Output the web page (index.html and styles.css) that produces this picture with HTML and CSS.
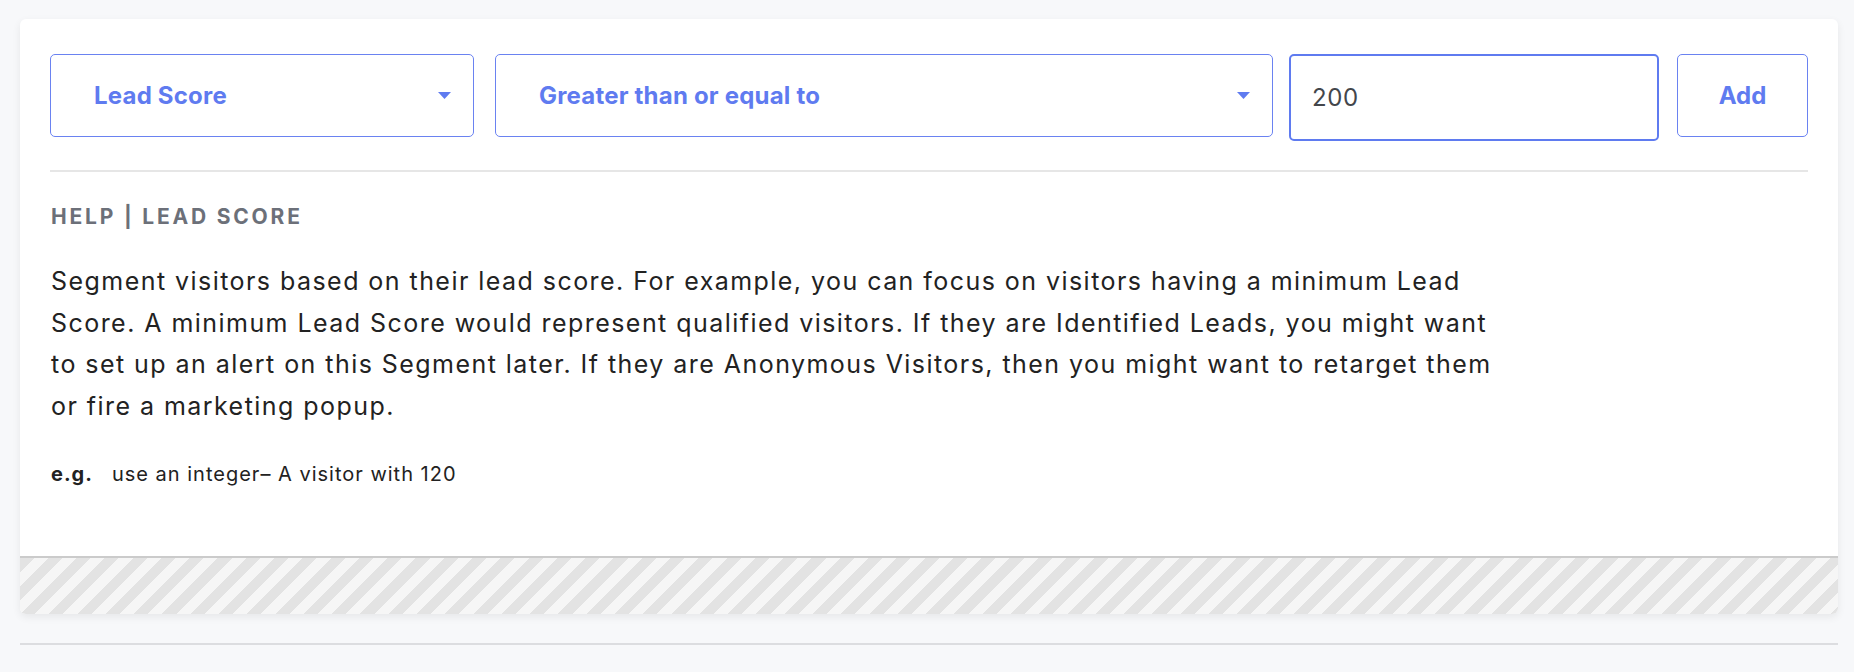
FILE: index.html
```html
<!DOCTYPE html>
<html lang="en">
<head>
    <meta charset="UTF-8">
    <meta name="viewport" content="width=device-width, initial-scale=1.0">
    <title>Segment Filter - Lead Score</title>
    <link rel="stylesheet" href="styles.css">
</head>
<body>
    <div class="page">
        <div class="card">
            <div class="card-body">
                <!-- Filter row -->
                <div class="filter-row">
                    <div class="select select-field">
                        <span>Lead Score</span>
                        <svg class="caret" width="13" height="7" viewBox="0 0 13 7"><path d="M0 0h13L6.5 7z" fill="currentColor"/></svg>
                    </div>
                    <div class="select select-op">
                        <span>Greater than or equal to</span>
                        <svg class="caret" width="13" height="7" viewBox="0 0 13 7"><path d="M0 0h13L6.5 7z" fill="currentColor"/></svg>
                    </div>
                    <input class="value-input" type="text" value="200">
                    <button class="add-btn">Add</button>
                </div>

                <!-- Help -->
                <div class="help">
                    <h4 class="help-title">Help | Lead Score</h4>
                    <p class="help-text">Segment visitors based on their lead score. For example, you can focus on visitors having a minimum Lead Score. A minimum Lead Score would represent qualified visitors. If they are Identified Leads, you might want to set up an alert on this Segment later. If they are Anonymous Visitors, then you might want to retarget them or fire a marketing popup.</p>
                    <p class="help-example"><strong>e.g.</strong><span>use an integer– A visitor with 120</span></p>
                </div>
            </div>
            <div class="drop-zone"></div>
        </div>
        <hr class="divider">
    </div>
</body>
</html>
```

FILE: styles.css
```css
body {
    font-family: 'Inter', 'Liberation Sans', sans-serif;
    background-color: #f7f8fa;
    margin: 0;
    padding: 0;
    color: #222;
}

.page {
    padding: 19px 16px 0 20px;
}

.card {
    background-color: white;
    border-radius: 6px;
    box-shadow: 0 3px 8px rgba(0, 0, 0, 0.07);
    overflow: hidden;
}

.card-body {
    padding: 35px 30px 70px 30px;
}

.filter-row {
    display: flex;
    align-items: flex-start;
    padding-bottom: 29px;
    border-bottom: 2px solid #e6e6e6;
}

.select {
    box-sizing: border-box;
    height: 83px;
    display: flex;
    align-items: center;
    justify-content: space-between;
    padding: 0 22px 0 43px;
    border: 1px solid #6a82f1;
    border-radius: 5px;
    color: #5f7bf0;
    font-size: 24px;
    font-weight: 700;
    letter-spacing: 0.2px;
}

.select-field {
    width: 424px;
}

.select-op {
    width: 778px;
    margin-left: 21px;
}

.caret {
    display: block;
}

.value-input {
    box-sizing: border-box;
    width: 370px;
    height: 87px;
    margin-left: 16px;
    padding: 0 21px;
    border: 2px solid #5f7bf0;
    border-radius: 5px;
    font-family: inherit;
    font-size: 24px;
    letter-spacing: 0.6px;
    color: #43464b;
    outline: none;
}

.add-btn {
    flex: 1;
    height: 83px;
    margin-left: 18px;
    background-color: white;
    border: 1px solid #6a82f1;
    border-radius: 5px;
    color: #5f7bf0;
    font-family: inherit;
    font-size: 24px;
    font-weight: 700;
}

.help-title {
    margin: 32px 0 0 1px;
    font-size: 21px;
    line-height: 25px;
    font-weight: 700;
    letter-spacing: 2.8px;
    text-transform: uppercase;
    color: #6c7079;
}

.help-text {
    max-width: 1458px;
    margin: 32px 0 0 1px;
    font-size: 25px;
    line-height: 41.5px;
    letter-spacing: 1.45px;
    color: #222;
}

.help-example {
    margin: 35px 0 0 1px;
    font-size: 20px;
    line-height: 24px;
    letter-spacing: 1px;
}

.help-example strong {
    margin-right: 19px;
}

.drop-zone {
    height: 56px;
    border-top: 2px solid #cbcbcb;
    background: repeating-linear-gradient(135deg, #e3e3e3 0, #e3e3e3 10px, #f6f6f6 10px, #f6f6f6 20px);
}

.divider {
    margin: 29px 0 0 0;
    border: none;
    border-top: 2px solid #dcdde0;
}
```
